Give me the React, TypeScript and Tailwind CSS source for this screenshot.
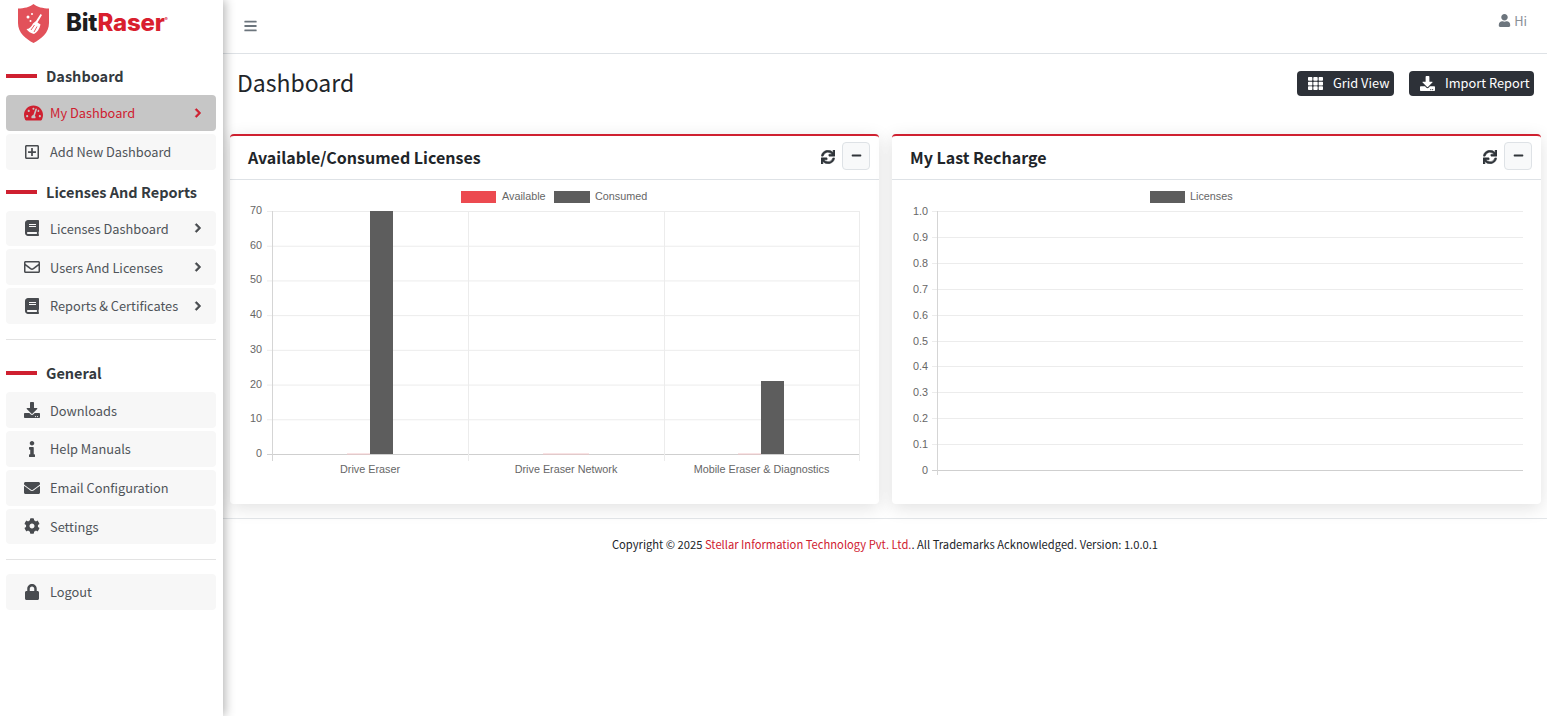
import React from 'react';
import {
  FaBars, FaBook, FaChevronRight, FaCog, FaDownload, FaEnvelope, FaInfo, FaLock, FaMinus,
  FaRegEnvelope, FaRegPlusSquare, FaSync, FaTachometerAlt, FaTh, FaUser,
} from 'react-icons/fa';

const FONT = '"Noto Sans CJK SC", "Noto Sans", sans-serif';
const CHART_FONT = '"Liberation Sans", Arial, sans-serif';

type IconType = React.ComponentType<{ className?: string }>;

function SectionTitle({ label, className }: { label: string; className: string }) {
  return (
    <div className={`flex items-center gap-[9px] ${className}`}>
      <span className="h-[4px] w-[31px] bg-[#cf2030]" />
      <span className="text-[14.5px] leading-[20px] font-bold text-[#343a40]">{label}</span>
    </div>
  );
}

function NavItem({ icon: Icon, label, arrow, active, iconClass }: { icon: IconType; label: string; arrow?: boolean; active?: boolean; iconClass?: string }) {
  return (
    <div className={`mb-[3px] flex h-[35.75px] items-center rounded-[4px] pl-[18px] pr-[13px] text-[12.8px] whitespace-nowrap ${active ? 'bg-[#c6c6c6] text-[#cf2030]' : 'bg-[#f7f7f7] text-[#4f5459]'}`}>
      <span className="flex w-[26px] shrink-0 items-center justify-start">
        <Icon className={iconClass ?? 'h-[16px] w-[16px] text-[#484b4f]'} />
      </span>
      <span className="flex-1">{label}</span>
      {arrow && <FaChevronRight className={`h-[10px] w-[10px] [stroke-width:40] ${active ? 'text-[#cf2030]' : 'text-[#484b4f]'}`} />}
    </div>
  );
}

function Logo() {
  return (
    <div className="flex h-[52px] items-center pl-[18px]">
      <svg width="31" height="39" viewBox="0 0 31 39" className="-mt-[5px] shrink-0">
        <path d="M15.5 0 C19 3 25 4.500 31 4.500 L31 19 C31 29 23 35 15.500 39 C8 35 0 29 0 19 L0 4.500 C6 4.500 12 3 15.500 0Z" fill="#e2515a" />
        <path d="M22.500 10 L24 11 L19.500 18.500 L22.500 20.500 C21.500 25 19 28.500 16 30 C13 29.500 10 27.500 8.500 25 C11 25 13.500 23 15 19.500 L18 17 Z" fill="#fff" />
        <path d="M13 26 L16.500 21 M16 28 L19 22.500" stroke="#e2515a" strokeWidth="0.9" fill="none" />
        <circle cx="10" cy="13" r="1.500" fill="#fff" />
        <circle cx="14" cy="10" r="1" fill="#fff" />
        <circle cx="12.500" cy="17" r="1" fill="#fff" />
      </svg>
      <div className="-mt-[7px] ml-[17px] text-[24px] leading-none font-extrabold tracking-[-0.2px]" style={{ fontFamily: 'Inter, sans-serif' }}>
        <span className="text-[#1d1d1f]">Bit</span>
        <span className="text-[#d9202e]">Raser</span>
        <span className="relative -top-[10px] text-[5px] text-[#d9202e]">®</span>
      </div>
    </div>
  );
}

function Sidebar() {
  return (
    <aside className="z-10 h-full w-[223px] shrink-0 bg-white shadow-[2px_0_10px_rgba(0,0,0,0.3)]">
      <Logo />
      <div className="pl-[6px] pr-[7px]">
        <SectionTitle label="Dashboard" className="mb-[9px] mt-[14px]" />
        <NavItem icon={FaTachometerAlt} label="My Dashboard" arrow active iconClass="h-[18px] w-[19px] text-[#cf2030]" />
        <NavItem icon={FaRegPlusSquare} label="Add New Dashboard" />
        <SectionTitle label="Licenses And Reports" className="mb-[9px] mt-[12px]" />
        <NavItem icon={FaBook} label="Licenses Dashboard" arrow />
        <NavItem icon={FaRegEnvelope} label="Users And Licenses" arrow />
        <NavItem icon={FaBook} label="Reports & Certificates" arrow />
        <div className="mb-[23px] mt-[15px] border-t border-[#e3e3e3]" />
        <SectionTitle label="General" className="mb-[9.5px]" />
        <NavItem icon={FaDownload} label="Downloads" />
        <NavItem icon={FaInfo} label="Help Manuals" />
        <NavItem icon={FaEnvelope} label="Email Configuration" />
        <NavItem icon={FaCog} label="Settings" />
        <div className="mb-[14px] mt-[14.5px] border-t border-[#e3e3e3]" />
        <NavItem icon={FaLock} label="Logout" />
      </div>
    </aside>
  );
}

function ActionButton({ icon: Icon, label, className }: { icon: IconType; label: string; className: string }) {
  return (
    <button className={`flex h-[25px] items-center rounded-[4px] bg-[#2d3138] pb-[1px] text-[12.8px] whitespace-nowrap text-white ${className}`}>
      <Icon className="mr-[10px] h-[15px] w-[15px]" />
      {label}
    </button>
  );
}

function Card({ title, children }: { title: string; children: React.ReactNode }) {
  return (
    <section className="h-[370px] flex-1 rounded-[4px] border-t-[2px] border-[#cf2030] bg-white shadow-[0_4px_18px_rgba(0,0,0,0.12)]">
      <div className="flex h-[44px] items-center border-b border-[#dee2e6] pb-[4px] pl-[18px] pr-[9px]">
        <h3 className="flex-1 pt-[2px] text-[16px] font-bold text-[#212529]">{title}</h3>
        <FaSync className="mr-[7px] mt-[2px] h-[14px] w-[14px] text-[#30353a] [stroke-width:20]" />
        <span className="flex h-[28px] w-[28px] items-center justify-center rounded-[4px] border border-[#dee2e6] bg-[#f8f9fa]">
          <FaMinus className="h-[11px] w-[11px] text-[#30353a]" />
        </span>
      </div>
      {children}
    </section>
  );
}

function LicensesChart() {
  const ticks = [70, 60, 50, 40, 30, 20, 10, 0];
  const y = (v: number) => 31 + (70 - v) * (243 / 70);
  return (
    <svg width="649" height="324" className="block" style={{ fontFamily: CHART_FONT }}>
      <rect x="231" y="11" width="35" height="12" fill="#ec4a50" />
      <text x="272" y="20" fontSize="10.800" fill="#666">Available</text>
      <rect x="324" y="11" width="36" height="12" fill="#5d5d5d" />
      <text x="365" y="20" fontSize="10.800" fill="#666">Consumed</text>
      {ticks.map((t) => (
        <g key={t}>
          <line x1="37" x2="629" y1={y(t) + 0.5} y2={y(t) + 0.5} stroke={t === 0 ? '#cfcfcf' : '#ececec'} />
          <text x="32" y={y(t) + 3} textAnchor="end" fontSize="10.800" fill="#666">{t}</text>
        </g>
      ))}
      <line x1="42.500" x2="42.500" y1="31" y2="281" stroke="#d5d5d5" />
      {[238.5, 434.5, 629.5].map((x) => (
        <line key={x} x1={x} x2={x} y1="31" y2="281" stroke="#ececec" />
      ))}
      <rect x="140" y="31" width="23" height="243" fill="#5d5d5d" />
      <rect x="531" y="201" width="23" height="73" fill="#5d5d5d" />
      <line x1="117" x2="140" y1="274" y2="274" stroke="#f3c6c8" />
      <line x1="313" x2="359" y1="274" y2="274" stroke="#f3c6c8" />
      <line x1="508" x2="531" y1="274" y2="274" stroke="#f3c6c8" />
      <text x="140" y="293" textAnchor="middle" fontSize="10.800" fill="#666">Drive Eraser</text>
      <text x="336" y="293" textAnchor="middle" fontSize="10.800" fill="#666">Drive Eraser Network</text>
      <text x="531.500" y="293" textAnchor="middle" fontSize="10.800" fill="#666">Mobile Eraser &amp; Diagnostics</text>
    </svg>
  );
}

function RechargeChart() {
  const ticks = ['1.0', '0.9', '0.8', '0.7', '0.6', '0.5', '0.4', '0.3', '0.2', '0.1', '0'];
  return (
    <svg width="649" height="324" className="block" style={{ fontFamily: CHART_FONT }}>
      <rect x="258" y="11" width="35" height="12" fill="#5d5d5d" />
      <text x="298" y="20" fontSize="10.800" fill="#666">Licenses</text>
      {ticks.map((t, i) => {
        const y = Math.round(31 + i * 25.9) + 0.5;
        return (
          <g key={t}>
            <line x1="40" x2="631" y1={y} y2={y} stroke={t === '0' ? '#cfcfcf' : '#ececec'} />
            <text x="36" y={y + 3} textAnchor="end" fontSize="10.800" fill="#666">{t}</text>
          </g>
        );
      })}
      <line x1="45.500" x2="45.500" y1="31" y2="295" stroke="#d5d5d5" />
    </svg>
  );
}

export default function App() {
  return (
    <div className="flex h-[716px] w-full overflow-hidden bg-white" style={{ fontFamily: FONT }}>
      <Sidebar />
      <main className="min-w-0 flex-1">
        <header className="flex h-[54px] items-start justify-between border-b border-[#dee2e6] pl-[21px] pr-[20px]">
          <FaBars className="mt-[19px] h-[14px] w-[13px] text-[#6c757d]" />
          <div className="mt-[11px] flex items-center gap-[3px] text-[12.8px] text-[#8a9096]">
            <FaUser className="h-[13px] w-[13px] text-[#6c757d]" />
            Hi
          </div>
        </header>
        <div className="flex h-[80px] items-start justify-between pl-[14px] pr-[13px]">
          <h1 className="mt-[10px] text-[23px] leading-[36px] text-[#212529]">Dashboard</h1>
          <div className="mt-[17px] flex gap-[15px]">
            <ActionButton icon={FaTh} label="Grid View" className="w-[97px] pl-[11px]" />
            <ActionButton icon={FaDownload} label="Import Report" className="w-[125px] pl-[11px]" />
          </div>
        </div>
        <div className="flex gap-[13px] pl-[7px] pr-[6px]">
          <Card title="Available/Consumed Licenses"><LicensesChart /></Card>
          <Card title="My Last Recharge"><RechargeChart /></Card>
        </div>
        <footer className="mt-[14px] border-t border-[#e3e6e9] pt-[16px] text-center text-[11.2px] leading-[18px] text-[#212529]">
          Copyright © 2025 <span className="text-[#cf2030]">Stellar Information Technology Pvt. Ltd.</span>. All Trademarks Acknowledged. Version: 1.0.0.1
        </footer>
      </main>
    </div>
  );
}
